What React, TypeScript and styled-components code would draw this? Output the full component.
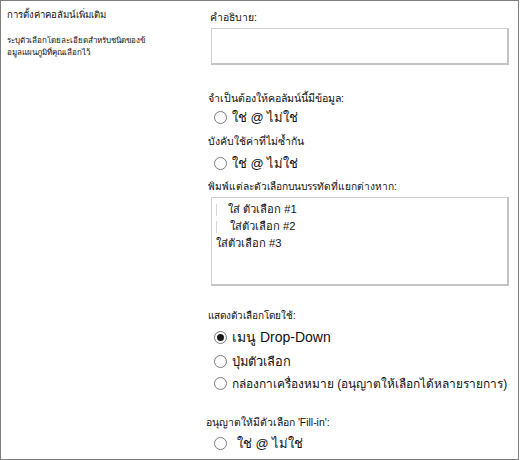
import React from "react";
import styled, { createGlobalStyle } from "styled-components";

const Global = createGlobalStyle`
  html, body { margin: 0; padding: 0; background: #fff; }
  body { font-family: "Liberation Sans", Arial, "Noto Sans", sans-serif; color: #111; }
`;

const Frame = styled.div`
  box-sizing: border-box;
  width: 519px;
  height: 460px;
  border: 1px solid #7d7d7d;
  display: grid;
  grid-template-columns: 206px 1fr;
  overflow: hidden;
`;

const Side = styled.div`
  padding: 7px 0 0 6px;
`;

const SideTitle = styled.div`
  font-size: 9.6px;
  line-height: 14px;
  white-space: nowrap;
`;

const SideText = styled.div`
  margin-top: 13px;
  font-size: 8px;
  line-height: 12px;
  white-space: nowrap;
`;

const Main = styled.div`
  display: flex;
  flex-direction: column;
  padding-left: 1px;
`;

const Label = styled.div<{ $mt: number; $ml?: number; $fs?: number }>`
  margin-top: ${(p) => p.$mt}px;
  margin-left: ${(p) => p.$ml ?? 0}px;
  font-size: ${(p) => p.$fs ?? 10.4}px;
  line-height: 16px;
  white-space: nowrap;
`;

const Box = styled.div<{ $mt: number; $h: number }>`
  box-sizing: border-box;
  margin-top: ${(p) => p.$mt}px;
  margin-left: 3px;
  width: 298px;
  height: ${(p) => p.$h}px;
  border: 1px solid #cfcfcf;
  border-right: 2px solid #c4c4c4;
  border-bottom: 2px solid #c4c4c4;
  background: #fff;
`;

const ListBox = styled(Box)`
  padding: 3px 0 0 0;
  font-size: 11.2px;
  line-height: 17px;
`;

const Line = styled.div<{ $indent: number; $mark?: boolean }>`
  position: relative;
  padding-left: ${(p) => p.$indent}px;
  white-space: nowrap;
  &::before {
    content: "";
    display: ${(p) => (p.$mark ? "block" : "none")};
    position: absolute;
    left: 4px;
    top: 3px;
    width: 1px;
    height: 12px;
    background: #d8d8d8;
  }
`;

const Row = styled.div<{ $mt: number; $gap?: number; $fs?: number }>`
  margin-top: ${(p) => p.$mt}px;
  height: 20px;
  display: flex;
  align-items: center;
  padding-left: 6px;
  gap: ${(p) => p.$gap ?? 5}px;
  font-size: ${(p) => p.$fs ?? 13}px;
  white-space: nowrap;
`;

const Radio = styled.span<{ $on?: boolean }>`
  box-sizing: border-box;
  width: 13px;
  height: 13px;
  border-radius: 50%;
  border: 1px solid #7a7a7a;
  background: #fff;
  display: inline-flex;
  align-items: center;
  justify-content: center;
  flex: none;
  &::after {
    content: "";
    display: ${(p) => (p.$on ? "block" : "none")};
    width: 7px;
    height: 7px;
    border-radius: 50%;
    background: #1a1a1a;
  }
`;

export default function App() {
  return (
    <>
      <Global />
      <Frame>
        <Side>
          <SideTitle>การตั้งค่าคอลัมน์เพิ่มเติม</SideTitle>
          <SideText>
            ระบุตัวเลือกโดยละเอียดสำหรับชนิดของข้
            <br />
            อมูลแผนภูมิที่คุณเลือกไว้
          </SideText>
        </Side>
        <Main>
          <Label $mt={9} $ml={2}>คำอธิบาย:</Label>
          <Box $mt={2} $h={37} />
          <Label $mt={25} $fs={10.6}>จำเป็นต้องให้คอลัมน์นี้มีข้อมูล:</Label>
          <Row $mt={1}>
            <Radio />
            <span>ใช่ @ ไม่ใช่</span>
          </Row>
          <Label $mt={7}>บังคับใช้ค่าที่ไม่ซ้ำกัน</Label>
          <Row $mt={3}>
            <Radio />
            <span>ใช่ @ ไม่ใช่</span>
          </Row>
          <Label $mt={6} $fs={10.2}>พิมพ์แต่ละตัวเลือกบนบรรทัดที่แยกต่างหาก:</Label>
          <ListBox $mt={2} $h={89}>
            <Line $indent={16} $mark>ใส่ ตัวเลือก #1</Line>
            <Line $indent={18} $mark>ใส่ตัวเลือก #2</Line>
            <Line $indent={4}>ใส่ตัวเลือก #3</Line>
          </ListBox>
          <Label $mt={22} $fs={10}>แสดงตัวเลือกโดยใช้:</Label>
          <Row $mt={3} $fs={14}>
            <Radio $on />
            <span>เมนู Drop-Down</span>
          </Row>
          <Row $mt={4} $fs={12.8}>
            <Radio />
            <span>ปุ่มตัวเลือก</span>
          </Row>
          <Row $mt={2} $fs={11.9}>
            <Radio />
            <span>กล่องกาเครื่องหมาย (อนุญาตให้เลือกได้หลายรายการ)</span>
          </Row>
          <Label $mt={22} $ml={-2}>อนุญาตให้มีตัวเลือก 'Fill-in':</Label>
          <Row $mt={2} $gap={10}>
            <Radio />
            <span>ใช่ @ ไม่ใช่</span>
          </Row>
        </Main>
      </Frame>
    </>
  );
}
